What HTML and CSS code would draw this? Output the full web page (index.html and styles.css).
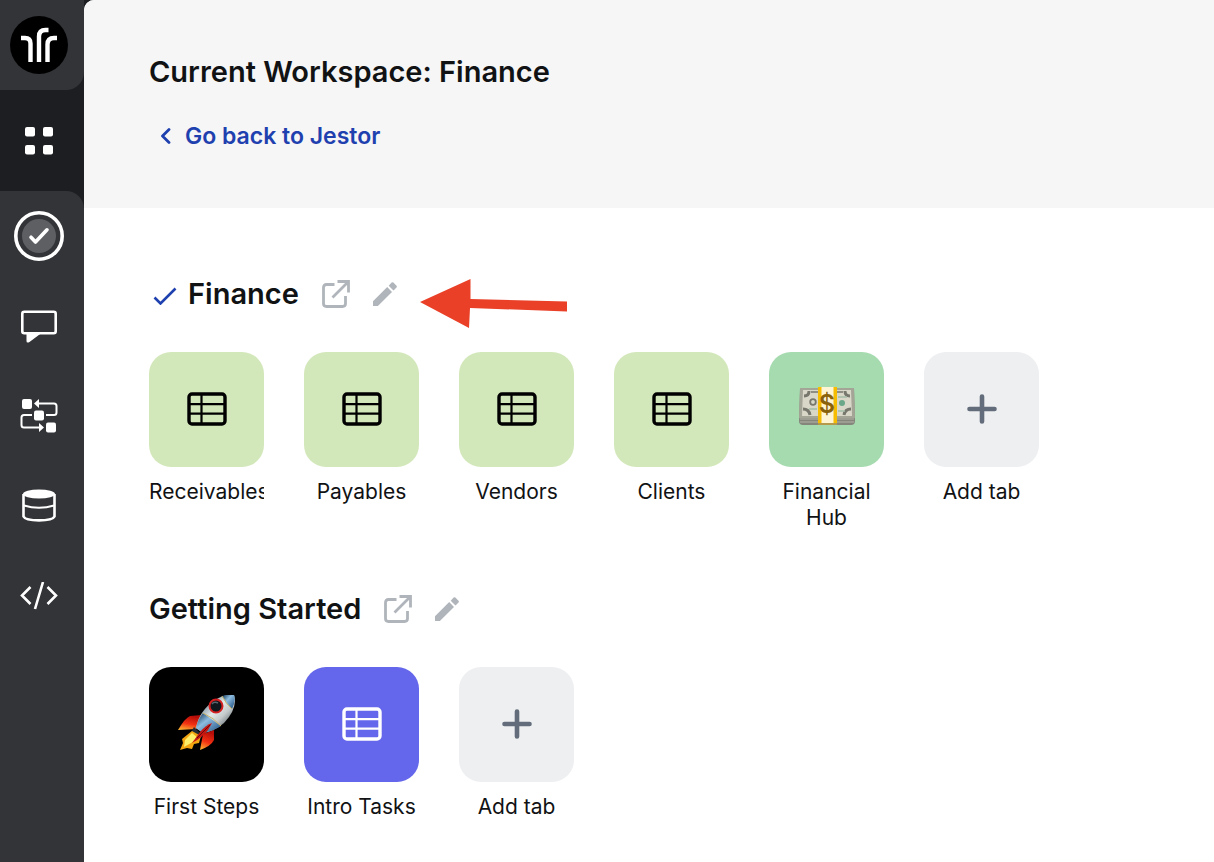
FILE: index.html
```html
<!DOCTYPE html>
<html lang="en">
<head>
    <meta charset="UTF-8">
    <meta name="viewport" content="width=device-width, initial-scale=1.0">
    <title>Jestor - Finance</title>
    <link rel="stylesheet" href="styles.css">
</head>
<body>

<!-- Shared icons -->
<svg class="sprite" aria-hidden="true">
    <symbol id="icon-table" viewBox="0 0 40 34">
        <rect x="2" y="2" width="36" height="30" rx="3" fill="none" stroke="currentColor" stroke-width="3.4"/>
        <path d="M14.5 2v30M2 12.2h36M2 21.6h36" fill="none" stroke="currentColor" stroke-width="2.2"/>
    </symbol>
    <symbol id="icon-plus" viewBox="0 0 30 30">
        <path d="M15 2.5v25M2.5 15h25" fill="none" stroke="currentColor" stroke-width="4.6" stroke-linecap="round"/>
    </symbol>
    <symbol id="icon-open" viewBox="0 0 28 28">
        <path d="M12.5 4.500H4.500Q1.500 4.500 1.500 7.500V23.500Q1.500 26.500 4.500 26.500H20.500Q23.500 26.500 23.500 23.500V16" fill="none" stroke="currentColor" stroke-width="2.800"/>
        <path d="M15.500 1.500H26.500V12.500M26 2L10.500 17.500" fill="none" stroke="currentColor" stroke-width="2.800"/>
    </symbol>
    <symbol id="icon-edit" viewBox="0 0 24 24">
        <path d="M0 19.300V24H4.900L19 9.900 14.200 5.100ZM15.700 3.700L20.500 8.500 23.500 5.500Q24.300 4.600 23.500 3.700L20.400.6Q19.500-.2 18.600.6Z" fill="currentColor"/>
    </symbol>
</svg>

<div class="app">
    <nav class="sidebar">
        <div class="sidebar-top">
            <a href="#" class="logo" aria-label="Jestor">
                <svg width="58" height="58" viewBox="0 0 58 58">
                    <circle cx="29" cy="29" r="29" fill="#000"/>
                    <path d="M11 22H15Q20.500 22 20.500 27.500V46M38.500 14H35.500Q29 14 29 20.500V46M47 22H44Q37.500 22 37.500 28.500V46" fill="none" stroke="#fff" stroke-width="4.400"/>
                </svg>
            </a>
        </div>
        <div class="sidebar-apps">
            <button class="nav-button" aria-label="Apps">
                <svg width="28" height="28" viewBox="0 0 28 28" fill="#fff">
                    <rect width="10" height="9.500" rx="2"/>
                    <rect x="18" width="10" height="9.500" rx="2"/>
                    <rect y="18" width="10" height="9.500" rx="2"/>
                    <rect x="18" y="18" width="10" height="9.500" rx="2"/>
                </svg>
            </button>
        </div>
        <div class="sidebar-menu">
            <button class="nav-button" aria-label="Tasks">
                <svg width="50" height="50" viewBox="0 0 50 50" fill="none">
                    <circle cx="25" cy="25" r="23.200" stroke="#fff" stroke-width="3.600"/>
                    <circle cx="25" cy="25" r="17" fill="#5e5f63"/>
                    <path d="M17 26.200L21.500 31 33 18.800" stroke="#fff" stroke-width="3.600" stroke-linecap="round" stroke-linejoin="round"/>
                </svg>
            </button>
            <button class="nav-button" aria-label="Messages">
                <svg width="36" height="34" viewBox="0 0 36 34">
                    <rect x="1.300" y="2.800" width="33.400" height="21.400" rx="2" fill="none" stroke="#fff" stroke-width="2.600"/>
                    <path d="M5.500 24H20.500L8.500 33Q5.500 34.500 5.500 32Z" fill="#fff"/>
                </svg>
            </button>
            <button class="nav-button" aria-label="Automations">
                <svg width="38" height="34" viewBox="0 1 38 34" fill="none">
                    <g fill="#fff">
                        <rect x="2" y="1" width="10" height="10" rx="2"/>
                        <rect x="14" y="12.500" width="10" height="10" rx="2"/>
                        <rect x="26" y="24.500" width="10" height="10" rx="2"/>
                        <path d="M14 5.500L19 1V10ZM24 29.500L19 25V34Z"/>
                    </g>
                    <path d="M18 5.500H34Q36.500 5.500 36.500 8V14.500Q36.500 17 34 17H26M12 17H4Q1.500 17 1.500 19.500V27Q1.500 29.500 4 29.500H20" stroke="#fff" stroke-width="2"/>
                </svg>
            </button>
            <button class="nav-button" aria-label="Data">
                <svg width="34" height="34" viewBox="0 1 34 34" fill="none">
                    <ellipse cx="17" cy="6" rx="16" ry="4.500" fill="#fff"/>
                    <path d="M1.500 6V28.500C4 33.700 30 33.700 32.500 28.500V6" stroke="#fff" stroke-width="2.600"/>
                    <path d="M2 17.500Q17 22 32 17.500" stroke="#fff" stroke-width="2"/>
                </svg>
            </button>
            <button class="nav-button" aria-label="Developers">
                <svg width="38" height="28" viewBox="0 0 38 28" fill="none" stroke="#fff" stroke-width="2.600">
                    <path d="M10.500 5L2 13.500 10.500 22M27.500 5L36 13.500 27.500 22M23 0L15 27"/>
                </svg>
            </button>
        </div>
    </nav>

    <main class="main">
        <header class="header">
            <h1>Current Workspace: Finance</h1>
            <a href="#" class="back-link">
                <svg width="10" height="16" viewBox="0 0 10 16" fill="none">
                    <path d="M8 1.500L1.500 8 8 14.500" stroke="currentColor" stroke-width="2.800" stroke-linecap="round" stroke-linejoin="round"/>
                </svg>
                Go back to Jestor
            </a>
        </header>

        <div class="content">
            <section class="workspace">
                <div class="workspace-title">
                    <svg class="check" width="24" height="18" viewBox="0 0 24 18" fill="none">
                        <path d="M1.500 10.500L7.500 16.500 22.500 1.500" stroke="currentColor" stroke-width="2.600"/>
                    </svg>
                    <h2>Finance</h2>
                    <button class="icon-button" aria-label="Open Finance"><svg width="28" height="28"><use href="#icon-open"/></svg></button>
                    <button class="icon-button" aria-label="Edit Finance"><svg width="24" height="24"><use href="#icon-edit"/></svg></button>
                    <svg class="arrow" width="148" height="50" viewBox="0 0 148 50">
                        <path d="M0 23L50.500 0V20L147 22.500V32.500L50 29 49 49Z" fill="#ea4027"/>
                    </svg>
                </div>
                <div class="tabs">
                    <a href="#" class="tab">
                        <span class="tile lime"><svg width="40" height="34"><use href="#icon-table"/></svg></span>
                        <span class="tab-name">Receivables</span>
                    </a>
                    <a href="#" class="tab">
                        <span class="tile lime"><svg width="40" height="34"><use href="#icon-table"/></svg></span>
                        <span class="tab-name">Payables</span>
                    </a>
                    <a href="#" class="tab">
                        <span class="tile lime"><svg width="40" height="34"><use href="#icon-table"/></svg></span>
                        <span class="tab-name">Vendors</span>
                    </a>
                    <a href="#" class="tab">
                        <span class="tile lime"><svg width="40" height="34"><use href="#icon-table"/></svg></span>
                        <span class="tab-name">Clients</span>
                    </a>
                    <a href="#" class="tab">
                        <span class="tile green">
                            <svg width="58" height="44" viewBox="0 2 58 44">
                                <path d="M2 4H56L57 36Q57 40 53 40H5Q1 40 1 36Z" fill="#85857c"/>
                                <path d="M2 34H56M2 37H56" stroke="#b5b4a8"/>
                                <path d="M2 3H56L57 33H1Z" fill="#a5a597"/>
                                <path d="M5 5H53L54 31H4Z" fill="#d8d7c8"/>
                                <path d="M6 11Q11 11 11 6M52 11Q47 11 47 6M5 24Q11 24 12 30M53 24Q47 24 46 30" fill="none" stroke="#77776e" stroke-width="3"/>
                                <path d="M13 7H20M39 7H45" stroke="#77776e" stroke-width="1.500"/>
                                <circle cx="15" cy="17" r="2.800" fill="#d8d7c8" stroke="#77776d" stroke-width="1.800"/>
                                <path d="M11 24H19M40 12H49M40 26H47" stroke="#a3bda6" stroke-width="1.500"/>
                                <circle cx="44" cy="18" r="3" fill="#6ba88a"/>
                                <path d="M20 2H39V40H20Z" fill="#f6bc00"/>
                                <path d="M23.500 2H35.500V40H23.500Z" fill="#fff5d5"/>
                                <path d="M20 38H39V40H20Z" fill="#b49a4a"/>
                                <text class="cash-sign" x="29" y="28" text-anchor="middle">$</text>
                            </svg>
                        </span>
                        <span class="tab-name">Financial Hub</span>
                    </a>
                    <button class="tab">
                        <span class="tile add"><svg width="30" height="30"><use href="#icon-plus"/></svg></span>
                        <span class="tab-name">Add tab</span>
                    </button>
                </div>
            </section>

            <section class="workspace">
                <div class="workspace-title">
                    <h2>Getting Started</h2>
                    <button class="icon-button" aria-label="Open Getting Started"><svg width="28" height="28"><use href="#icon-open"/></svg></button>
                    <button class="icon-button" aria-label="Edit Getting Started"><svg width="24" height="24"><use href="#icon-edit"/></svg></button>
                </div>
                <div class="tabs">
                    <a href="#" class="tab">
                        <span class="tile black">
                            <svg width="58" height="58" viewBox="0 1 58 58">
                                <defs>
                                    <linearGradient id="hull" x1="0" y1="0" x2="1" y2="1">
                                        <stop offset="0.2" stop-color="#6f8794"/>
                                        <stop offset="0.45" stop-color="#e3e8e8"/>
                                        <stop offset="0.62" stop-color="#c4cacb"/>
                                        <stop offset="0.85" stop-color="#555d63"/>
                                    </linearGradient>
                                    <linearGradient id="steel" x1="0" y1="0" x2="1" y2="1">
                                        <stop offset="0.1" stop-color="#28506f"/>
                                        <stop offset="0.4" stop-color="#8dbce0"/>
                                        <stop offset="0.9" stop-color="#2c5c8c"/>
                                    </linearGradient>
                                    <linearGradient id="fin" x1="0.3" y1="0" x2="0" y2="1">
                                        <stop offset="0" stop-color="#b60d08"/>
                                        <stop offset="0.5" stop-color="#f33112"/>
                                        <stop offset="1" stop-color="#ffc234"/>
                                    </linearGradient>
                                </defs>
                                <path d="M24 21L12 22Q7 24 0 36L18 35Z" fill="url(#fin)"/>
                                <path d="M36 36V46Q33 52 22 56L25 40Z" fill="url(#fin)"/>
                                <path d="M16 33L25 42 20 46 12 40Z" fill="#232b34"/>
                                <path d="M14 37L4 45 5 49 2 56 9 54 14 55 16 50 21 49 23 42Z" fill="#f2a511"/>
                                <path d="M14 39L7 46 6 53 13 49 20 44Z" fill="#ffef68"/>
                                <path d="M18 34Q21 17 37 6 47 0 56 1 60 14 46 29 37 37 25 39Z" fill="url(#hull)"/>
                                <path d="M18 34Q20 25 25 19L43 32Q35 37 25 39Z" fill="url(#steel)"/>
                                <path d="M44 2Q50 0 56 1 58 7 54 15 49 10 44 2Z" fill="url(#steel)"/>
                                <path d="M25 19Q36 24 43 32M44 2Q48 10 54 15" fill="none" stroke="#c7b267" stroke-width="1"/>
                                <circle cx="38" cy="12" r="6.500" fill="#11181d" stroke="#d61f20" stroke-width="2"/>
                                <path d="M34 10Q36 7 40 9" fill="none" stroke="#59666e" stroke-width="1.500"/>
                                <path d="M34 29Q28 31 22 38L14 49Q25 43 30 36Z" fill="#c41613"/>
                                <path d="M32 31L19 44" stroke="#6d0707"/>
                            </svg>
                        </span>
                        <span class="tab-name">First Steps</span>
                    </a>
                    <a href="#" class="tab">
                        <span class="tile indigo"><svg width="40" height="34"><use href="#icon-table"/></svg></span>
                        <span class="tab-name">Intro Tasks</span>
                    </a>
                    <button class="tab">
                        <span class="tile add"><svg width="30" height="30"><use href="#icon-plus"/></svg></span>
                        <span class="tab-name">Add tab</span>
                    </button>
                </div>
            </section>
        </div>
    </main>
</div>

</body>
</html>
```
FILE: styles.css
```css
* {
    box-sizing: border-box;
}
body {
    margin: 0;
    font-family: Inter, "Liberation Sans", sans-serif;
    color: #111214;
    background-color: #1d1e22;
}
h1, h2 {
    margin: 0;
    font-size: 29px;
    font-weight: 600;
    line-height: 36px;
}
button {
    padding: 0;
    border: none;
    background: none;
    font-family: inherit;
    color: inherit;
    cursor: pointer;
}
svg {
    display: block;
}
.sprite {
    display: none;
}
.app {
    display: flex;
    min-height: 100vh;
}

/* Sidebar */
.sidebar {
    display: flex;
    flex-direction: column;
    flex-shrink: 0;
    width: 84px;
}
.sidebar-top {
    height: 90px;
    padding: 16px 10px;
    background-color: #333438;
    border-bottom-right-radius: 18px;
}
.logo {
    display: block;
}
.sidebar-apps {
    display: flex;
    align-items: center;
    height: 101px;
}
.sidebar-menu {
    flex-grow: 1;
    background-color: #333438;
    border-top-right-radius: 18px;
}
.nav-button {
    display: flex;
    align-items: center;
    justify-content: center;
    width: 78px;
    height: 90px;
}

/* Main area */
.main {
    flex-grow: 1;
    min-width: 0;
    background-color: #fff;
    border-top-left-radius: 10px;
    overflow: hidden;
}
.header {
    padding: 54px 65px;
    height: 208px;
    background-color: #f6f6f6;
}
.back-link {
    display: inline-flex;
    align-items: center;
    gap: 14px;
    margin-top: 30px;
    padding-left: 12px;
    color: #1f40af;
    font-size: 23px;
    font-weight: 600;
    line-height: 32px;
    text-decoration: none;
}
.content {
    display: flex;
    flex-direction: column;
    gap: 60px;
    padding: 68px 65px 40px;
}
.workspace-title {
    position: relative;
    display: flex;
    align-items: center;
    margin-bottom: 40px;
}
.check {
    margin: 4px 11px 0 4px;
    color: #1f40af;
}
.icon-button {
    margin-left: 23px;
    color: #b0b5bb;
}
/* Pointer drawn over the title row */
.arrow {
    position: absolute;
    top: 3px;
    left: 271px;
}

/* Tabs */
.tabs {
    display: flex;
    flex-wrap: wrap;
    align-items: flex-start;
    gap: 40px;
}
.tab {
    width: 115px;
    color: inherit;
    text-align: center;
    text-decoration: none;
}
.tile {
    display: flex;
    align-items: center;
    justify-content: center;
    height: 115px;
    margin-bottom: 12px;
    padding-bottom: 1px;
    border-radius: 22px;
}
.lime {
    background-color: #d3e8ba;
    color: #000;
}
.green {
    background-color: #a6dbb0;
}
.black {
    background-color: #000;
}
.indigo {
    background-color: #6466eb;
    color: #fff;
}
.add {
    background-color: #eeeff1;
    color: #636c7a;
}
/* Long names are cut at the tile's edge */
.tab-name {
    display: block;
    font-size: 21px;
    line-height: 26px;
    overflow: hidden;
}
.cash-sign {
    font-size: 25px;
    font-weight: 600;
    fill: #8a620c;
}
```
